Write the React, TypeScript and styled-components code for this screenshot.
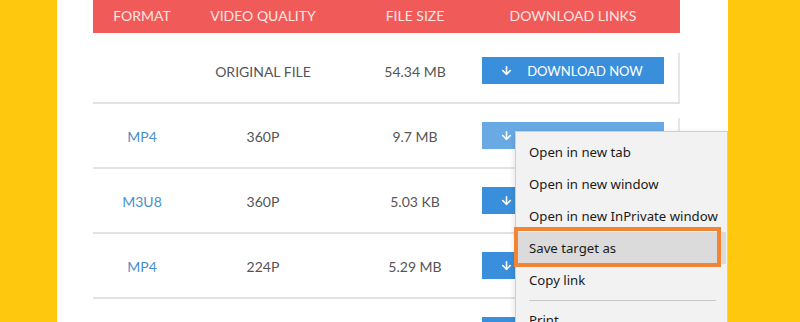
import React from 'react'
import styled, { createGlobalStyle } from 'styled-components'
import { ArrowDown } from 'lucide-react'

const GlobalStyle = createGlobalStyle`
  html, body {
    margin: 0;
    padding: 0;
  }
  body {
    font-family: Lato, "Liberation Sans", sans-serif;
    background: #fdc80d;
  }
`

type Item = {
  format: string
  quality: string
  size: string
  hover?: boolean
}

const rows: Item[] = [
  { format: '', quality: 'ORIGINAL FILE', size: '54.34 MB' },
  { format: 'MP4', quality: '360P', size: '9.7 MB', hover: true },
  { format: 'M3U8', quality: '360P', size: '5.03 KB' },
  { format: 'MP4', quality: '224P', size: '5.29 MB' },
  { format: '', quality: '', size: '' },
]

const menuItems = [
  'Open in new tab',
  'Open in new window',
  'Open in new InPrivate window',
  'Save target as',
  'Copy link',
]

export default function App() {
  return (
    <>
      <GlobalStyle />
      <Page>
        <Panel>
          <Table>
            <HeaderRow>
              <HeadCell>FORMAT</HeadCell>
              <HeadCell>VIDEO QUALITY</HeadCell>
              <HeadCell shift>FILE SIZE</HeadCell>
              <HeadCell>DOWNLOAD LINKS</HeadCell>
            </HeaderRow>
            {rows.map((row, i) => (
              <Row key={i} first={i === 0}>
                <FormatCell>{row.format}</FormatCell>
                <Cell>{row.quality}</Cell>
                <Cell shift>{row.size}</Cell>
                <ButtonCell>
                  <DownloadButton hover={row.hover}>
                    <ArrowDown size={13} strokeWidth={3} />
                    <span>DOWNLOAD NOW</span>
                  </DownloadButton>
                </ButtonCell>
              </Row>
            ))}
          </Table>
          <Menu>
            {menuItems.map((text) => (
              <MenuItem key={text} active={text === 'Save target as'}>
                {text}
              </MenuItem>
            ))}
            <Separator />
            <MenuItem>Print</MenuItem>
            <Highlight />
          </Menu>
        </Panel>
      </Page>
    </>
  )
}

const Page = styled.div`
  display: flex;
  height: 322px;
  padding: 0 72px 0 57px;
  background: #fdc80d;
  overflow: hidden;
`

const Panel = styled.div`
  position: relative;
  flex: 1;
  background: #ffffff;
  padding-left: 36px;
  overflow: hidden;
`

const Table = styled.div`
  width: 587px;
`

const HeaderRow = styled.div`
  display: grid;
  grid-template-columns: 98px 144px 147px 182px;
  align-items: center;
  height: 33px;
  background: #f05a58;
  color: #fde6e4;
  font-size: 14px;
  padding-bottom: 3px;
  box-sizing: border-box;
`

type ShiftProps = { shift?: boolean }

const HeadCell = styled.div<ShiftProps>`
  text-align: center;
  padding-left: ${(p) => (p.shift ? '13px' : '0')};
`

type RowProps = { first?: boolean }

const Row = styled.div<RowProps>`
  position: relative;
  display: grid;
  grid-template-columns: 98px 144px 147px 182px;
  align-items: center;
  height: 65px;
  margin-top: ${(p) => (p.first ? '6px' : '0')};
  border-bottom: 2px solid #dfe3e8;
  box-sizing: border-box;
  font-size: 14px;
  color: #555555;

  &::after {
    content: '';
    position: absolute;
    right: 0;
    top: 14px;
    bottom: 0;
    width: 2px;
    background: #e3e6ea;
  }
`

const Cell = styled.div<ShiftProps>`
  text-align: center;
  padding-left: ${(p) => (p.shift ? '13px' : '0')};
  padding-top: 2px;
`

const FormatCell = styled(Cell)`
  color: #4a8fcb;
`

const ButtonCell = styled.div`
  display: flex;
`

type ButtonProps = { hover?: boolean }

const DownloadButton = styled.div<ButtonProps>`
  display: flex;
  align-items: center;
  justify-content: center;
  gap: 14px;
  width: 182px;
  height: 27px;
  background: ${(p) => (p.hover ? '#6aaae4' : '#3a8fdc')};
  color: #ffffff;
  font-size: 13px;
  padding-right: 3px;
  box-sizing: border-box;

  span {
    padding-top: 1px;
  }
`

const Menu = styled.div`
  position: absolute;
  left: 458px;
  top: 131px;
  width: 213px;
  padding: 4px 1px 0;
  background: #f2f2f2;
  border: 1px solid #cfcfcf;
  box-shadow: 0 2px 6px rgba(0, 0, 0, 0.15);
  box-sizing: border-box;
  font-family: "Noto Sans", "Open Sans", sans-serif;
  font-size: 13.2px;
  color: #1a1a1a;
`

type MenuItemProps = { active?: boolean }

const MenuItem = styled.div<MenuItemProps>`
  height: 32px;
  line-height: 32px;
  padding-left: 12px;
  white-space: nowrap;
  background: ${(p) => (p.active ? '#dbdbdb' : 'transparent')};
`

const Separator = styled.div`
  height: 1px;
  margin: 4px 10px 3px 12px;
  background: #c8c8c8;
`

const Highlight = styled.div`
  position: absolute;
  left: -2px;
  top: 95px;
  width: 207px;
  height: 40px;
  border: 4px solid #f28433;
  box-sizing: border-box;
  pointer-events: none;
`
